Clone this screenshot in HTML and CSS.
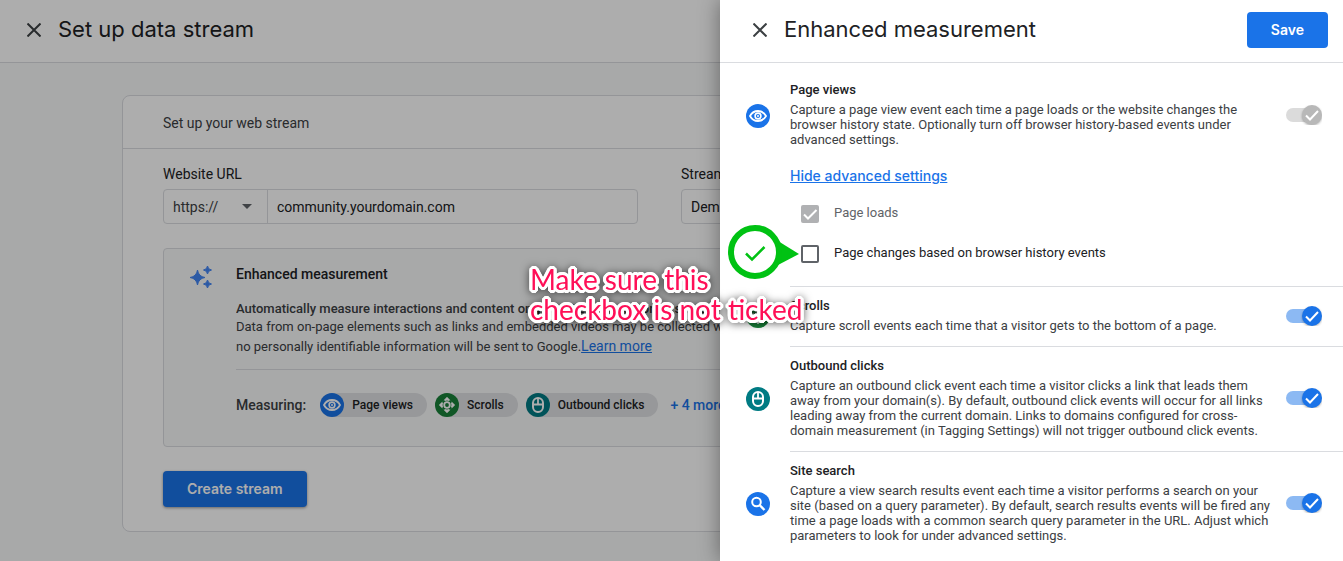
FILE: index.html
```html
<!DOCTYPE html>
<html lang="en">
<head>
<meta charset="utf-8">
<title>Set up data stream</title>
<link rel="stylesheet" href="styles.css">
</head>
<body>
<svg class="defs" aria-hidden="true">
  <symbol id="close" viewBox="0 0 14 14"><path d="M0.500 0.500L13.500 13.500M13.500 0.500L0.500 13.500" fill="none" stroke="currentColor" stroke-width="2"/></symbol>
  <symbol id="eye" viewBox="0 0 24 24"><path d="M4 12C6 8.300 9 7 12 7S18 8.300 20 12C18 15.700 15 17 12 17S6 15.700 4 12Z" fill="none" stroke="currentColor" stroke-width="1.800"/><circle cx="12" cy="12" r="2.900" fill="none" stroke="currentColor" stroke-width="1.600"/><circle cx="12" cy="12" r="1" fill="currentColor"/></symbol>
  <symbol id="scroll" viewBox="0 0 24 24"><path d="M12 5.500L18.500 12L12 18.500L5.500 12Z" fill="none" stroke="currentColor" stroke-width="1.800" stroke-dasharray="5.600 3.592" stroke-dashoffset="2.800"/><circle cx="12" cy="12" r="2.800" fill="none" stroke="currentColor" stroke-width="1.800"/><path d="M12 4L15.500 7.500H8.500ZM12 20L15.500 16.500H8.500ZM4 12L7.500 8.500V15.500ZM20 12L16.500 8.500V15.500Z" fill="currentColor"/></symbol>
  <symbol id="mouse" viewBox="0 0 24 24"><rect x="7" y="5" width="10" height="14" rx="5" fill="none" stroke="currentColor" stroke-width="2"/><path d="M7 11.500H17M12 5V11.500" fill="none" stroke="currentColor" stroke-width="1.800"/></symbol>
  <symbol id="search" viewBox="0 0 24 24"><circle cx="10.500" cy="10" r="4.300" fill="none" stroke="currentColor" stroke-width="2"/><path d="M13.500 13L18.500 18" fill="none" stroke="currentColor" stroke-width="2.400"/></symbol>
  <symbol id="toggle" viewBox="0 0 36 20"><rect class="track" x="0" y="3" width="32" height="14" rx="7"/><circle class="knob" cx="26" cy="10" r="10"/><path class="tick" d="M20 10.500L24 14.500L32 6" fill="none" stroke-width="2"/></symbol>
</svg>

<main class="page">
  <header class="bar">
    <button class="close" aria-label="Close"><svg><use href="#close"/></svg></button>
    <h1 class="title">Set up data stream</h1>
  </header>
  <div class="canvas">
    <section class="card">
      <h2 class="card-head">Set up your web stream</h2>
      <form class="card-body">
        <div class="fields">
          <div class="field">
            <label for="url">Website URL</label>
            <div class="box">
              <div class="scheme">
                <select aria-label="Protocol"><option>https://</option><option>http://</option></select>
                <svg class="caret" viewBox="0 0 10 5"><path d="M0 0H10L5 5Z" fill="currentColor"/></svg>
              </div>
              <input id="url" type="text" value="community.yourdomain.com">
            </div>
          </div>
          <div class="field">
            <label for="name">Stream name</label>
            <div class="box"><input id="name" type="text" value="Demo stream"></div>
          </div>
        </div>
        <section class="enhanced">
          <svg class="sparkle" viewBox="0 0 22 22"><path d="M7.500 4Q8.500 10.500 15 11.500Q8.500 12.500 7.500 19Q6.500 12.500 0 11.500Q6.500 10.500 7.500 4ZM17.500 0Q18 3.500 21.500 4Q18 4.500 17.500 8Q17 4.500 13.500 4Q17 3.500 17.500 0ZM17.500 14Q18 17.500 21.500 18Q18 18.500 17.500 22Q17 18.500 13.500 18Q17 17.500 17.500 14Z" fill="#4285f4" stroke="#4285f4" stroke-width="1"/></svg>
          <div class="enhanced-main">
            <h3>Enhanced measurement</h3>
            <p class="lead">Automatically measure interactions and content on your sites in addition to standard page view measurement.</p>
            <p class="note">Data from on-page elements such as links and embedded videos may be collected with relevant events.</p>
            <p class="note last">no personally identifiable information will be sent to Google.<a href="#">Learn more</a></p>
            <div class="measuring">
              <span class="measuring-label">Measuring:</span>
              <span class="chip"><svg class="dot blue"><use href="#eye"/></svg>Page views</span>
              <span class="chip"><svg class="dot green"><use href="#scroll"/></svg>Scrolls</span>
              <span class="chip"><svg class="dot teal"><use href="#mouse"/></svg>Outbound clicks</span>
              <a class="more" href="#">+ 4 more</a>
            </div>
          </div>
        </section>
        <button class="primary create" type="button">Create stream</button>
      </form>
    </section>
  </div>
</main>
<div class="scrim"></div>

<aside class="drawer">
  <header class="bar">
    <button class="close" aria-label="Close panel"><svg><use href="#close"/></svg></button>
    <h2 class="title">Enhanced measurement</h2>
    <button class="primary">Save</button>
  </header>
  <div class="events">
    <section class="event">
      <svg class="dot blue"><use href="#eye"/></svg>
      <div class="event-main">
        <div class="event-text"><h3>Page views</h3><p>Capture a page view event each time a page loads or the website changes the browser history state. Optionally turn off browser history-based events under advanced settings.</p></div>
        <label class="switch off"><input type="checkbox" checked disabled aria-label="Page views"><svg><use href="#toggle"/></svg></label>
      </div>
      <div class="advanced">
        <a href="#">Hide advanced settings</a>
        <label class="option disabled"><input type="checkbox" checked disabled><svg class="mark" viewBox="0 0 18 18"><path d="M3 9.500L7 13.500L15.500 5" fill="none" stroke="#fff" stroke-width="2"/></svg><span>Page loads</span></label>
        <label class="option"><input type="checkbox"><span>Page changes based on browser history events</span></label>
      </div>
    </section>
    <section class="event">
      <svg class="dot green"><use href="#scroll"/></svg>
      <div class="event-main">
        <div class="event-text"><h3>Scrolls</h3><p>Capture scroll events each time that a visitor gets to the bottom of a page.</p></div>
        <label class="switch"><input type="checkbox" checked aria-label="Scrolls"><svg><use href="#toggle"/></svg></label>
      </div>
    </section>
    <section class="event">
      <svg class="dot teal"><use href="#mouse"/></svg>
      <div class="event-main">
        <div class="event-text"><h3>Outbound clicks</h3><p>Capture an outbound click event each time a visitor clicks a link that leads them away from your domain(s). By default, outbound click events will occur for all links leading away from the current domain. Links to domains configured for cross-domain measurement (in Tagging Settings) will not trigger outbound click events.</p></div>
        <label class="switch"><input type="checkbox" checked aria-label="Outbound clicks"><svg><use href="#toggle"/></svg></label>
      </div>
    </section>
    <section class="event">
      <svg class="dot blue"><use href="#search"/></svg>
      <div class="event-main">
        <div class="event-text"><h3>Site search</h3><p>Capture a view search results event each time a visitor performs a search on your site (based on a query parameter). By default, search results events will be fired any time a page loads with a common search query parameter in the URL. Adjust which parameters to look for under advanced settings.</p></div>
        <label class="switch"><input type="checkbox" checked aria-label="Site search"><svg><use href="#toggle"/></svg></label>
      </div>
    </section>
  </div>
</aside>

<svg class="pin" viewBox="0 0 72 54" aria-hidden="true"><path d="M50 16L71 29L50 40Z" fill="#00c213"/><circle cx="27" cy="27" r="24" fill="#fff" stroke="#00c213" stroke-width="6"/><path d="M18 28.500L24 34.500L36.500 22" fill="none" stroke="#00c213" stroke-width="2.500"/></svg>
<p class="callout">Make sure this<br>checkbox is not ticked</p>
</body>
</html>
```

FILE: styles.css
```css
* { box-sizing: border-box; }
body, h1, h2, h3, p { margin: 0; font-weight: 400; }
body {
  position: relative;
  min-height: 100vh;
  overflow: hidden;
  font-family: Roboto, "Liberation Sans", sans-serif;
  font-size: 14px;
  color: #202124;
}
.defs { position: absolute; width: 0; height: 0; }
button { border: 0; background: none; padding: 0; }
a { color: #1a73e8; }

/* Top bars */
.bar {
  display: flex;
  align-items: center;
  height: 63px;
  padding: 0 15px 3px 27px;
  border-bottom: 1px solid #dadce0;
  background: #fff;
}
.close { width: 14px; height: 14px; margin-right: 17px; color: #3c4043; }
.close svg { display: block; width: 14px; height: 14px; }
.title { flex: 1; padding-bottom: 2px; font: 400 22px/28px Inter, sans-serif; }
.primary {
  height: 36px;
  padding: 0 24px;
  border-radius: 4px;
  background: #1a73e8;
  color: #fff;
  font: 600 14px/20px Inter, sans-serif;
}

/* Page behind the drawer */
.page { min-height: 100vh; background: #f8f9fa; }
.canvas { padding: 32px 146px 29px 122px; }
.card { border: 1px solid #dadce0; border-radius: 8px; background: #fff; }
.card-head {
  padding: 18px 40px 15px;
  border-bottom: 1px solid #dadce0;
  font-size: 14px;
  line-height: 19px;
  color: #3c4043;
}
.card-body { padding: 16px 40px 24px; }
.fields { display: grid; grid-template-columns: 1fr 1fr; gap: 43px; }
.field label { display: block; margin-bottom: 6px; line-height: 18px; }
.box {
  display: flex;
  height: 35px;
  border: 1px solid #dadce0;
  border-radius: 4px;
  overflow: hidden;
}
.box input, .box select {
  flex: 1;
  min-width: 0;
  border: 0;
  background: none;
  font: inherit;
  color: inherit;
}
.box input { padding: 0 9px; }
.scheme {
  display: flex;
  align-items: center;
  width: 104px;
  padding: 0 15px 0 9px;
  border-right: 1px solid #dadce0;
  color: #3c4043;
}
.box select { appearance: none; padding: 0; }
.caret { width: 10px; height: 5px; color: #5f6368; }

.enhanced {
  display: flex;
  gap: 24px;
  margin: 24px 0;
  padding: 17px 0 29px 26px;
  border: 1px solid #dadce0;
  border-radius: 4px;
  background: #f8f9fa;
}
.sparkle { flex: none; width: 22px; height: 22px; }
.enhanced-main { flex: 1; min-width: 0; overflow: hidden; }
.enhanced h3 { font-size: 14px; font-weight: 500; line-height: 16px; }
.lead, .note { font-size: 13px; line-height: 18px; white-space: nowrap; color: #3c4043; }
.lead { margin-top: 18px; font-weight: 500; }
.last { line-height: 20px; padding-bottom: 12px; border-bottom: 1px solid #dadce0; }
.last a { font-size: 14px; }
.measuring { display: flex; align-items: center; gap: 8px; margin-top: 23px; }
.measuring-label { margin-right: 6px; font-weight: 500; color: #3c4043; }
.chip {
  display: flex;
  align-items: center;
  gap: 8px;
  padding-right: 14px;
  border-radius: 12px;
  background: #dfe1e3;
  font-size: 12px;
  font-weight: 500;
}
.more { margin-left: 4px; font-weight: 500; text-decoration: none; }
.create { display: block; box-shadow: 0 1px 3px rgba(0, 0, 0, .4); }

.dot { flex: none; width: 24px; height: 24px; border-radius: 50%; color: #fff; }
.blue { background: #1a73e8; }
.green { background: #188038; }
.teal { background: #007b83; }

.scrim { position: absolute; inset: 0; background: rgba(0, 0, 0, .32); }

/* Drawer */
.drawer {
  position: absolute;
  inset: 0 0 0 720px;
  background: #fff;
  box-shadow: 0 0 20px rgba(0, 0, 0, .4);
}
.drawer .bar { padding-left: 33px; }
.events { padding: 8px 0 0 26px; }
.event {
  display: grid;
  grid-template-columns: 24px 1fr;
  column-gap: 20px;
  align-items: center;
}
.event-main {
  display: flex;
  align-items: center;
  gap: 12px;
  padding: 11px 21px 13px 0;
}
.event-text { flex: 1; }
.event h3 { margin-bottom: 4px; font-size: 13px; font-weight: 500; line-height: 16px; }
.event p { font-size: 13px; line-height: 15px; color: #3c4043; }
.event + .event .event-main { border-top: 1px solid #dadce0; }
.advanced { grid-column: 2; padding: 6px 0 12px; }
.advanced a { display: block; margin-bottom: 8px; font: 500 14px/20px Inter, sans-serif; }
.option {
  position: relative;
  display: flex;
  align-items: center;
  height: 40px;
  padding-left: 11px;
  font-size: 13px;
}
.option span { padding-bottom: 3px; }
.option input {
  appearance: none;
  width: 18px;
  height: 18px;
  margin: 0 15px 0 0;
  border: 2px solid #5f6368;
  border-radius: 2px;
}
.disabled { color: #5f6368; }
.option.disabled input { border-color: #b0b1b3; background: #b0b1b3; }
.mark { position: absolute; left: 11px; width: 18px; height: 18px; }
.switch { position: relative; flex: none; width: 36px; height: 20px; color: #1a73e8; }
.switch input { position: absolute; inset: 0; margin: 0; width: 36px; height: 20px; opacity: 0; }
.switch svg { display: block; width: 36px; height: 20px; overflow: visible; }
.track { fill: currentColor; opacity: .5; }
.knob { fill: currentColor; filter: drop-shadow(0 1px 1px rgba(0, 0, 0, .3)); }
.tick { stroke: #fff; }
.switch.off { color: #b8b8b8; }

/* Annotation */
.pin { position: absolute; left: 728px; top: 225px; width: 72px; height: 54px; }
.callout {
  position: absolute;
  left: 530px;
  top: 264px;
  font: 400 28px/30px Lato, sans-serif;
  white-space: nowrap;
  color: #ff0f57;
  text-shadow:
    3px 0 #fff, -3px 0 #fff, 0 3px #fff, 0 -3px #fff,
    2px 2px #fff, -2px 2px #fff, 2px -2px #fff, -2px -2px #fff,
    1px 3px #fff, -1px 3px #fff, 1px -3px #fff, -1px -3px #fff,
    3px 1px #fff, -3px 1px #fff, 3px -1px #fff, -3px -1px #fff;
  filter: drop-shadow(0 1px 4px rgba(0, 0, 0, .6));
}
```
